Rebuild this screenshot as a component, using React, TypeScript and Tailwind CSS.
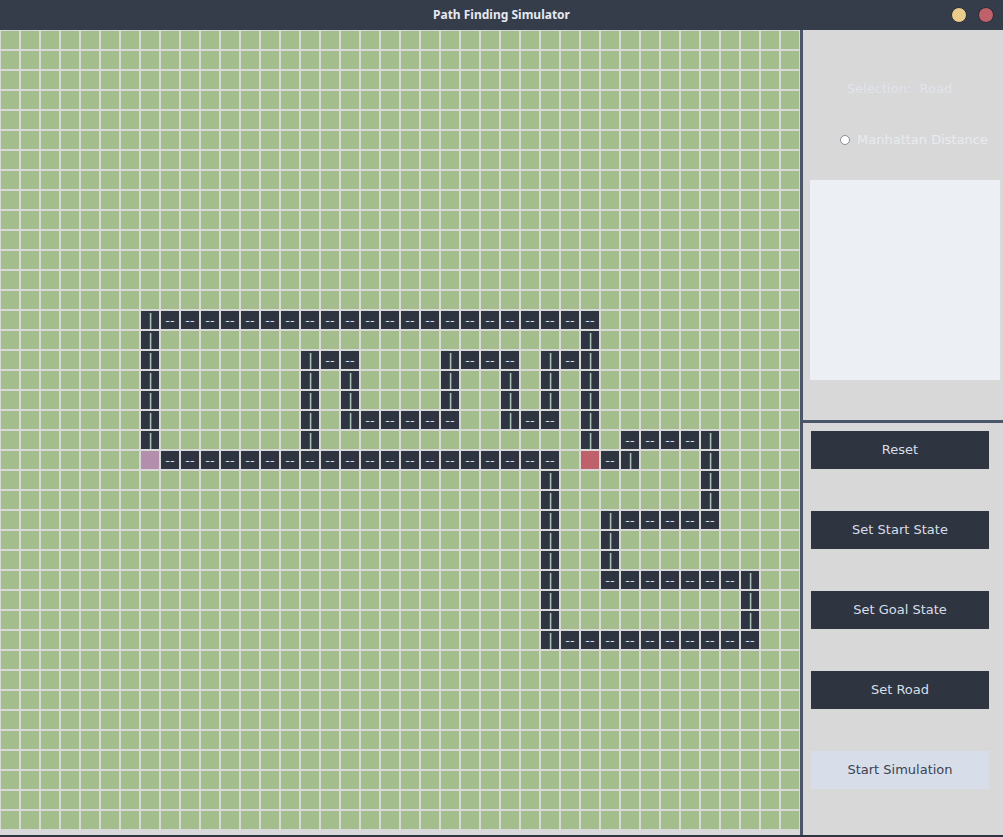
import React from "react"

type Cell = "" | "|" | "--" | "start" | "goal"

const COLS = 40
const ROWS = 40

function buildGrid(): Cell[][] {
  const g: Cell[][] = Array.from({ length: ROWS }, () => Array<Cell>(COLS).fill(""))
  const v = (r: number, ...cs: number[]) => cs.forEach((c) => (g[r][c] = "|"))
  const h = (r: number, from: number, to: number) => {
    for (let c = from; c <= to; c++) g[r][c] = "--"
  }

  v(14, 7)
  h(14, 8, 29)
  v(15, 7, 29)
  v(16, 7, 15, 22, 27, 29)
  h(16, 16, 17)
  h(16, 23, 25)
  h(16, 28, 28)
  v(17, 7, 15, 17, 22, 25, 27, 29)
  v(18, 7, 15, 17, 22, 25, 27, 29)
  v(19, 7, 15, 17, 25, 29)
  h(19, 18, 22)
  h(19, 26, 27)
  v(20, 7, 15, 29, 35)
  h(20, 31, 34)
  g[21][7] = "start"
  h(21, 8, 27)
  g[21][29] = "goal"
  h(21, 30, 30)
  v(21, 31, 35)
  v(22, 27, 35)
  v(23, 27, 35)
  v(24, 27, 30)
  h(24, 31, 35)
  v(25, 27, 30)
  v(26, 27, 30)
  v(27, 27, 37)
  h(27, 30, 36)
  v(28, 27, 37)
  v(29, 27, 37)
  v(30, 27)
  h(30, 28, 37)
  return g
}

const grid = buildGrid()

function GridCell({ kind }: { kind: Cell }) {
  if (kind === "start") return <div className="h-[18px] w-[18px] bg-[#b48ead]" />
  if (kind === "goal") return <div className="h-[18px] w-[18px] bg-[#bf616a]" />
  if (kind === "") return <div className="h-[18px] w-[18px] bg-[#a3be8c]" />
  if (kind === "|")
    return (
      <div className="flex h-[18px] w-[18px] items-center justify-center bg-[#2e3440] pl-px text-[15px] leading-none text-[#c8ccd4] antialiased">
        |
      </div>
    )
  return (
    <div className="flex h-[18px] w-[18px] items-center justify-center bg-[#2e3440] text-[13px] leading-none text-[#d8dee9] antialiased">
      --
    </div>
  )
}

function PanelButton({ label, light }: { label: string; light?: boolean }) {
  return (
    <button
      className={
        light
          ? "flex h-[38px] w-[178px] items-center justify-center bg-[#d8dee9] text-[13px] text-[#3b4252]"
          : "flex h-[38px] w-[178px] items-center justify-center bg-[#2e3440] text-[13px] text-[#d8dee9]"
      }
    >
      {label}
    </button>
  )
}

export default function App() {
  return (
    <div className="h-[837px] w-[1003px] overflow-hidden bg-[#2e3440] font-['DejaVu_Sans',sans-serif]">
      {/* title bar */}
      <div className="relative flex h-[30px] items-center justify-center bg-[#353c4a]">
        <span className="font-['Noto_Sans',sans-serif] text-[12px] font-bold text-[#e5e9f0]">
          Path Finding Simulator
        </span>
        <div className="absolute right-[9px] top-[7px] flex gap-[11px]">
          <span className="h-[16px] w-[16px] rounded-full border border-[#262b35] bg-[#ebcb8b]" />
          <span className="h-[16px] w-[16px] rounded-full border border-[#262b35] bg-[#bf616a]" />
        </div>
      </div>

      <div className="flex h-[805px]">
        {/* grid */}
        <div className="h-full w-[800px] bg-[#d8d8d8] p-px">
          <div className="grid grid-cols-[repeat(40,18px)] gap-[2px]">
            {grid.map((row, r) => row.map((kind, c) => <GridCell key={r * COLS + c} kind={kind} />))}
          </div>
        </div>

        {/* side panel */}
        <div className="flex h-full w-[203px] flex-col border-l-[3px] border-[#4c566a] bg-[#d8d8d8]">
          <div className="h-[393px] shrink-0 border-b-[3px] border-[#4c566a]">
            <div className="pl-[44px] pt-[51px] text-[13px] leading-[16px] text-[#e0e4ec]">Selection:&nbsp; Road</div>
            <div className="mt-[35px] flex items-center pl-[37px] text-[13px] leading-[16px] text-[#e8ebf0]">
              <span className="mr-[7px] h-[10px] w-[10px] rounded-full border border-[#8a8f99] bg-white" />
              Manhattan Distance
            </div>
            <div className="ml-[7px] mt-[32px] h-[200px] w-[190px] bg-[#eceff4]" />
          </div>
          <div className="flex flex-col gap-[42px] pl-[8px] pt-[8px]">
            <PanelButton label="Reset" />
            <PanelButton label="Set Start State" />
            <PanelButton label="Set Goal State" />
            <PanelButton label="Set Road" />
            <PanelButton label="Start Simulation" light />
          </div>
        </div>
      </div>
    </div>
  )
}
